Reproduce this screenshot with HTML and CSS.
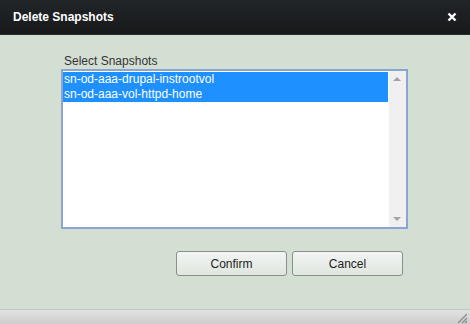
FILE: index.html
```html
<!DOCTYPE html>
<html>
<head>
<meta charset="utf-8">
<link rel="stylesheet" href="styles.css">
</head>
<body>
<div class="dialog">
  <div class="titlebar">
    <span class="title">Delete Snapshots</span>
    <svg class="close" width="10" height="10" viewBox="0 0 10 10"><path d="M1.5 1.5 L8.5 8.5 M8.5 1.5 L1.5 8.5" stroke="#fff" stroke-width="2.4"/></svg>
  </div>
  <div class="content">
    <div class="field">
      <div class="label">Select Snapshots</div>
      <div class="listbox">
        <div class="items">
          <div class="item selected">sn-od-aaa-drupal-instrootvol</div>
          <div class="item selected">sn-od-aaa-vol-httpd-home</div>
        </div>
        <div class="scrollbar">
          <svg width="17" height="10" viewBox="0 0 17 10"><polygon points="4,7 12,7 8,3" fill="#a3a3a3"/></svg>
          <svg width="17" height="10" viewBox="0 0 17 10"><polygon points="4,3 12,3 8,7" fill="#a3a3a3"/></svg>
        </div>
      </div>
    </div>
    <div class="buttons">
      <button class="btn">Confirm</button>
      <button class="btn">Cancel</button>
    </div>
  </div>
  <div class="statusbar">
    <svg class="grip" width="12" height="12" viewBox="0 0 12 12">
      <path d="M11 2 L2 11 M11 6 L6 11 M11 9 L9 11" stroke="#8a8a8a" stroke-width="1.2"/>
    </svg>
  </div>
</div>
</body>
</html>
```

FILE: styles.css
```css
html, body {
  margin: 0;
  padding: 0;
}
body {
  width: 470px;
  height: 324px;
  overflow: hidden;
  font-family: "Liberation Sans", Arial, sans-serif;
  font-size: 12px;
}
.dialog {
  width: 470px;
  height: 324px;
  display: flex;
  flex-direction: column;
  background: #d4dfd4;
}
.titlebar {
  height: 35px;
  flex: none;
  background: linear-gradient(#222528, #17191b);
  display: flex;
  align-items: center;
  justify-content: space-between;
  padding: 0 13px;
  box-sizing: border-box;
  border-bottom: 1px solid #2a2c2e;
}
.title {
  color: #fff;
  font-weight: bold;
  font-size: 12px;
}
.close {
  display: block;
  margin-right: 0;
}
.content {
  flex: 1;
  display: flex;
  flex-direction: column;
  padding: 19px 0 0 61px;
}
.label {
  color: #333;
  font-size: 12px;
  padding-left: 3px;
  line-height: 14px;
  height: 15px;
}
.listbox {
  width: 343px;
  height: 156px;
  border: 2px solid #8aa5d2;
  background: #fff;
  display: flex;
}
.items {
  flex: 1;
  padding: 1px 1px 0 0;
}
.item {
  height: 15px;
  line-height: 15px;
  padding-left: 1px;
  font-size: 12px;
  color: #222;
}
.item.selected {
  background: #1e90ff;
  color: #fff;
}
.scrollbar {
  width: 17px;
  background: #f0f0f0;
  display: flex;
  flex-direction: column;
  justify-content: space-between;
  padding: 3px 0 3px;
}
.scrollbar svg {
  display: block;
}
.buttons {
  display: flex;
  gap: 5px;
  margin: 22px 0 0 115px;
}
.btn {
  width: 111px;
  height: 25px;
  border: 1px solid #8a8f8a;
  border-radius: 3px;
  background: linear-gradient(#f2f5f2, #dfe5df);
  font-family: "Liberation Sans", Arial, sans-serif;
  font-size: 12px;
  color: #222;
  padding: 0;
}
.statusbar {
  height: 14px;
  flex: none;
  background: linear-gradient(#e2e2e2, #cdcdcd);
  border-top: 1px solid #c4c4c4;
  display: flex;
  justify-content: flex-end;
  align-items: flex-end;
  padding-right: 2px;
}
.grip {
  display: block;
}
```
